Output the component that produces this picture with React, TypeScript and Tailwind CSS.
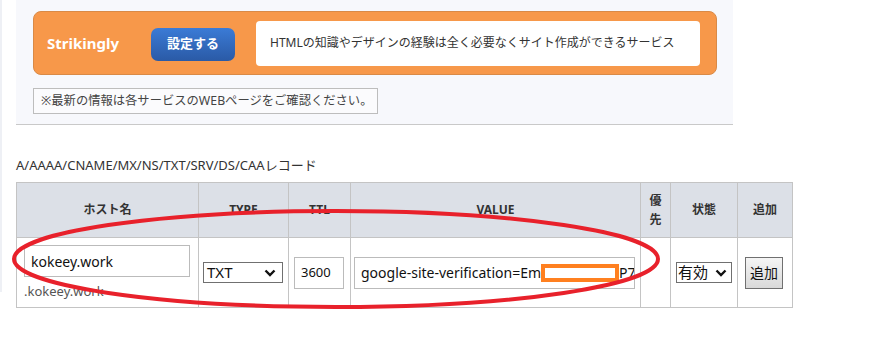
import React from 'react';

const font = { fontFamily: '"Noto Sans", "Noto Sans CJK JP", sans-serif' };

const Chevron = () => (
 <svg width="12" height="8" viewBox="0 0 12 8" className="shrink-0">
 <path d="M1.5 1.5 L6 6 L10.5 1.5" fill="none" stroke="#111" strokeWidth="2.4" />
 </svg>
);

const App = () => {
 return (
 <div className="relative w-[887px] h-[339px] bg-white overflow-hidden text-[#333]" style={font}>
 <div className="flex">
 <div className="w-[2px] h-[292px] bg-[#eef0f5]" />
 <div className="ml-[14px] w-[717px]">
 {/* service banner */}
 <div className="h-[125px] bg-[#f7f8fc] border-b border-[#c9c9c9] pt-[11px] pl-[17px]">
 <div className="w-[684px] h-[64px] rounded-[8px] bg-[#f7984a] border border-[#d98a47] flex items-center pl-[13px] pr-[16px]">
 <span className="text-white font-bold text-[15px] w-[104px]">Strikingly</span>
 <button className="w-[84px] h-[33px] mt-[2px] rounded-[7px] bg-gradient-to-b from-[#3b7bd6] to-[#2a5aa6] text-white font-bold text-[13px]">
 設定する
 </button>
 <div className="ml-[21px] flex-1 h-[45px] rounded-[4px] bg-white flex items-center pl-[14px] text-[12px] text-[#333] whitespace-nowrap">
 HTMLの知識やデザインの経験は全く必要なくサイト作成ができるサービス
 </div>
 </div>
 <div className="mt-[13px] w-[345px] h-[26px] border border-[#bdbdbd] bg-[#fbfbfd] flex items-center pl-[7px] text-[12.3px] text-[#444] whitespace-nowrap">
 ※最新の情報は各サービスのWEBページをご確認ください。
 </div>
 </div>

 <div className="mt-[32px] text-[13px] text-[#333] leading-[16px]">A/AAAA/CNAME/MX/NS/TXT/SRV/DS/CAAレコード</div>

 {/* record table */}
 <table className="mt-[9px] border-collapse table-fixed w-[776px] text-[#333]">
 <colgroup>
 <col className="w-[182px]" />
 <col className="w-[90px]" />
 <col className="w-[62px]" />
 <col className="w-[290px]" />
 <col className="w-[30px]" />
 <col className="w-[67px]" />
 <col className="w-[55px]" />
 </colgroup>
 <thead>
 <tr className="h-[55px] bg-[#dce0e7] text-[12px] font-bold">
 <th className="border border-[#c4c4c4]">ホスト名</th>
 <th className="border border-[#c4c4c4]">TYPE</th>
 <th className="border border-[#c4c4c4]">TTL</th>
 <th className="border border-[#c4c4c4]">VALUE</th>
 <th className="border border-[#c4c4c4] leading-[19px]">優<br />先</th>
 <th className="border border-[#c4c4c4]">状態</th>
 <th className="border border-[#c4c4c4]">追加</th>
 </tr>
 </thead>
 <tbody>
 <tr className="h-[70px]">
 <td className="border border-[#c4c4c4] align-top pt-[7px] pl-[7px]">
 <div className="w-[166px] h-[32px] border border-[#bbb] bg-white flex items-center pl-[6px] text-[14px] text-[#111]">kokeey.work</div>
 <div className="mt-[6px] text-[13px] text-[#555] leading-[16px]">.kokeey.work</div>
 </td>
 <td className="border border-[#c4c4c4] pl-[4px]">
 <div className="w-[80px] h-[21px] border border-[#707070] bg-white flex items-center justify-between pl-[3px] pr-[6px] text-[15px] text-[#111] leading-none">
 TXT
 <Chevron />
 </div>
 </td>
 <td className="border border-[#c4c4c4] pl-[5px]">
 <div className="w-[50px] h-[32px] border border-[#bbb] bg-white flex items-center pl-[6px] text-[13px] text-[#111]">3600</div>
 </td>
 <td className="border border-[#c4c4c4] pl-[3px]">
 <div className="w-[281px] h-[32px] border border-[#bbb] bg-white flex items-center pl-[6px] text-[14px] text-[#111] overflow-hidden whitespace-nowrap">
 google-site-verification=Em
 <span className="inline-block shrink-0 w-[78px] h-[18px] border-[4px] border-[#ff8020] bg-white" />
 P7
 </div>
 </td>
 <td className="border border-[#c4c4c4]" />
 <td className="border border-[#c4c4c4] pl-[5px]">
 <div className="w-[56px] h-[21px] border border-[#707070] bg-white flex items-center justify-between pl-[1px] pr-[4px] text-[15px] text-[#111] leading-none">
 有効
 <Chevron />
 </div>
 </td>
 <td className="border border-[#c4c4c4] pl-[7px]">
 <button className="w-[38px] h-[32px] border border-[#707070] bg-gradient-to-b from-[#f5f5f5] to-[#d9d9d9] text-[14px] text-[#111]">追加</button>
 </td>
 </tr>
 </tbody>
 </table>
 </div>
 </div>

 {/* hand-drawn highlight */}
 <svg className="absolute left-0 top-0 pointer-events-none" width="887" height="339">
 <ellipse cx="336" cy="259" rx="322" ry="48" fill="none" stroke="#e8212b" strokeWidth="4" />
 </svg>
 </div>
 );
};

export default App;
